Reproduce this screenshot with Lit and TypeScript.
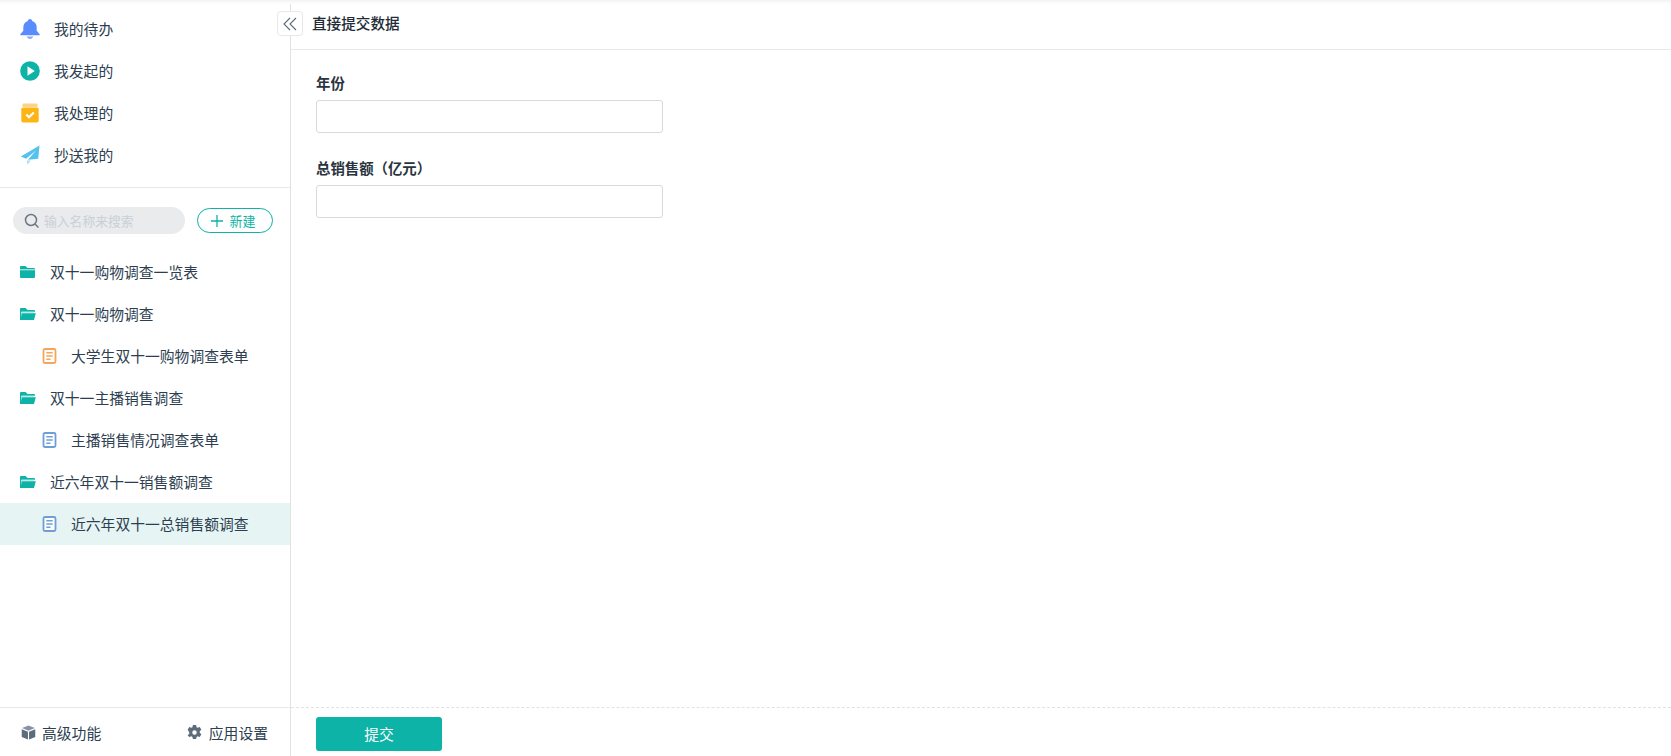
import { LitElement, css, html, svg } from "lit";
import { customElement } from "lit/decorators.js";

const bell = svg`<path fill="#5b8cff" d="M10 0c1.200 0 2 .8 2.200 1.900 3 1 4.500 3.500 4.500 6.500v3.400l3 3.400v1.100H.3v-1.100l3-3.400V8.400c0-3 1.500-5.500 4.500-6.500C8 .8 8.800 0 10 0z"/><path fill="#8fa8ff" d="M6.800 17.500h6.400c-.4 1.500-1.600 2.500-3.200 2.500s-2.800-1-3.200-2.500z"/>`;
const play = svg`<circle cx="10" cy="10" r="9.800" fill="#0db3a6"/><path fill="#fff" d="M7.500 5.300v9.400l7.300-4.700z"/>`;
const box = svg`<path fill="#fdd28a" d="M3.500 .5h13a1 1 0 0 1 1 1V4h-15V1.500a1 1 0 0 1 1-1z"/><rect x="1.300" y="4.500" width="17.400" height="15" rx="1.800" fill="#fdb515"/><path fill="none" stroke="#fff" stroke-width="2.200" d="M6.300 11.500l2.700 2.700 4.800-4.700"/>`;
const plane = svg`<path fill="#55c1ee" d="M19.500 .5L.8 11.500l5.200 2.300L16 5.500 8 14.800l10.200-1z"/><path fill="#9fdcf6" d="M7 15.500l3.800 0-3.400 4z"/>`;

const folder = (open: boolean) =>
  open
    ? svg`<path fill="#0db3a6" d="M1 3a1 1 0 0 1 1-1h4.500l2 2H15a1 1 0 0 1 1 1v.8H2.400V14H1z"/><rect x="2.400" y="5.800" width="12.600" height="1.400" fill="#bfe9e5"/><path fill="#0db3a6" d="M3 7.200H16.800L15 14H1.400z"/>`
    : svg`<path fill="#0db3a6" d="M1 3a1 1 0 0 1 1-1h4.500l2 2H15a1 1 0 0 1 1 1H1z"/><rect x="1" y="5" width="15" height="1.300" fill="#9fdcd6"/><path fill="#0db3a6" d="M1 6.300h15V13a1 1 0 0 1-1 1H2a1 1 0 0 1-1-1z"/>`;

const doc = (color: string) => svg`
  <rect x="1" y="1" width="12" height="14" rx="1.500" fill="#fff" stroke=${color} stroke-width="1.800"/>
  <path stroke=${color} stroke-width="1.500" d="M3.800 4.800h6.400M3.800 8h6.400M3.800 11.200h4.200"/>`;

const NAV = [
  { label: "我的待办", icon: bell },
  { label: "我发起的", icon: play },
  { label: "我处理的", icon: box },
  { label: "抄送我的", icon: plane },
];

const TREE = [
  { label: "双十一购物调查一览表", kind: "closed" },
  { label: "双十一购物调查", kind: "open" },
  { label: "大学生双十一购物调查表单", kind: "doc", color: "#f5a55a" },
  { label: "双十一主播销售调查", kind: "open" },
  { label: "主播销售情况调查表单", kind: "doc", color: "#6d9fd6" },
  { label: "近六年双十一销售额调查", kind: "open" },
  { label: "近六年双十一总销售额调查", kind: "doc", color: "#6d9fd6", active: true },
];

@customElement("app-root")
export class AppRoot extends LitElement {
  static styles = css`
    :host {
      display: flex;
      height: 756px;
      position: relative;
      font-family: "Liberation Sans", "Noto Sans CJK SC", sans-serif;
      font-size: 14.800px;
      color: #2c3e50;
      background: #fff;
      overflow: hidden;
    }
    .top-shadow {
      position: absolute;
      left: 0;
      right: 0;
      top: 0;
      height: 4px;
      background: linear-gradient(#f3f3f3, #fff);
    }
    aside {
      width: 291px;
      box-sizing: border-box;
      flex: none;
      border-right: 1px solid #e2e2e2;
      display: flex;
      flex-direction: column;
    }
    .nav {
      padding-top: 8px;
      height: 188px;
      box-sizing: border-box;
      border-bottom: 1px solid #e8e8e8;
    }
    .nav-row {
      height: 42px;
      display: flex;
      align-items: center;
      padding-left: 20px;
      gap: 14px;
    }
    .nav-row svg {
      width: 20px;
      height: 20px;
    }
    .nav-row span,
    .tree-row span {
      margin-top: -2px;
    }
    .tools {
      display: flex;
      align-items: center;
      padding: 19px 0 0 13px;
      height: 27px;
    }
    .search {
      width: 172px;
      height: 27px;
      background: #e9ebed;
      border-radius: 14px;
      display: flex;
      align-items: center;
      padding-left: 11px;
      box-sizing: border-box;
      gap: 4px;
      font-size: 12.800px;
      color: #c9d0d8;
    }
    .search svg {
      width: 16px;
      height: 16px;
      flex: none;
    }
    .new {
      margin-left: 12px;
      width: 76px;
      height: 25px;
      box-sizing: border-box;
      border: 1px solid #0db3a6;
      border-radius: 13px;
      display: flex;
      align-items: center;
      justify-content: center;
      gap: 5px;
      padding-right: 4px;
      font-size: 13px;
      color: #0db3a6;
    }
    .new svg {
      width: 14px;
      height: 14px;
    }
    .tree {
      margin-top: 17px;
      flex: 1;
    }
    .tree-row {
      height: 42px;
      display: flex;
      align-items: center;
      padding-left: 19px;
      gap: 14px;
    }
    .tree-row svg {
      width: 17px;
      height: 16px;
    }
    .tree-row.child {
      padding-left: 41px;
      gap: 13px;
    }
    .tree-row.active {
      background: #e6f5f4;
    }
    .side-foot {
      height: 49px;
      box-sizing: border-box;
      border-top: 1px solid #e8e8e8;
      display: flex;
      align-items: center;
      justify-content: space-between;
      padding: 0 22px 0 21px;
    }
    .foot-item {
      display: flex;
      align-items: center;
      gap: 6px;
    }
    .foot-item.settings {
      gap: 7px;
    }
    .foot-item svg {
      width: 15px;
      height: 15px;
    }
    main {
      flex: 1;
      display: flex;
      flex-direction: column;
      min-width: 0;
    }
    header {
      height: 50px;
      box-sizing: border-box;
      border-bottom: 1px solid #e8e8e8;
      padding: 0 0 4px 21px;
      display: flex;
      align-items: center;
      font-weight: 500;
      font-size: 14.600px;
      color: #222b35;
    }
    .form {
      flex: 1;
      padding: 24px 0 0 25px;
    }
    .field {
      margin-bottom: 26px;
    }
    .field label {
      display: block;
      font-size: 14.400px;
      font-weight: 700;
      line-height: 20px;
      margin-bottom: 6px;
      color: #2a3440;
    }
    .field input {
      display: block;
      width: 347px;
      height: 33px;
      box-sizing: border-box;
      border: 1px solid #d9d9d9;
      border-radius: 3px;
      background: #fff;
      outline: none;
    }
    .actions {
      height: 49px;
      box-sizing: border-box;
      border-top: 1px dashed #e2e2e2;
      padding: 9px 0 0 25px;
    }
    .submit {
      width: 126px;
      height: 34px;
      border: none;
      border-radius: 3px;
      background: #0db3a6;
      color: #fff;
      font: inherit;
      padding: 0 0 2px;
    }
    .collapse {
      position: absolute;
      left: 277px;
      top: 11px;
      width: 26px;
      height: 25px;
      box-sizing: border-box;
      background: #fff;
      border: 1px solid #e8e8e8;
      border-radius: 4px;
      display: flex;
      align-items: center;
      justify-content: center;
    }
    .collapse svg {
      width: 14px;
      height: 14px;
    }
  `;

  private treeIcon(row: (typeof TREE)[number]) {
    if (row.kind === "doc") {
      return html`<svg viewBox="0 0 14 16">${doc(row.color!)}</svg>`;
    }
    return html`<svg viewBox="0 0 17 16">${folder(row.kind === "open")}</svg>`;
  }

  render() {
    return html`
      <aside>
        <div class="nav">
          ${NAV.map(
            (n) => html`<div class="nav-row">
              <svg viewBox="0 0 20 20">${n.icon}</svg><span>${n.label}</span>
            </div>`
          )}
        </div>
        <div class="tools">
          <div class="search">
            <svg viewBox="0 0 16 16" fill="none" stroke="#6b7785" stroke-width="1.500">
              <circle cx="7" cy="7" r="5.500" /><path d="M11 11l3.500 3.500" />
            </svg>
            <span>输入名称来搜索</span>
          </div>
          <div class="new">
            <svg viewBox="0 0 14 14" stroke="#0db3a6" stroke-width="1.300"><path d="M7 1v12M1 7h12" /></svg>
            <span>新建</span>
          </div>
        </div>
        <div class="tree">
          ${TREE.map(
            (row) => html`<div
              class="tree-row ${row.kind === "doc" ? "child" : ""} ${row.active ? "active" : ""}"
            >
              ${this.treeIcon(row)}<span>${row.label}</span>
            </div>`
          )}
        </div>
        <div class="side-foot">
          <div class="foot-item">
            <svg viewBox="0 0 16 16">
              <path fill="#8593a3" d="M8 .5l6.800 2.700L8 6 1.200 3.200z" />
              <path fill="#5d6b7a" d="M.8 4.500l6.600 2.700v8.300L.8 12.700zM15.200 4.500v8.200l-6.600 2.800V7.200z" />
            </svg>
            <span>高级功能</span>
          </div>
          <div class="foot-item settings">
            <svg viewBox="0 0 16 16">
              <path
                fill="#5d6b7a"
                fill-rule="evenodd"
                d="M6.300 0h3.400l.5 2.300 1.200.7 2.200-.8 1.700 2.900-1.700 1.600v1.600l1.700 1.600-1.700 2.900-2.200-.8-1.200.7-.5 2.300H6.300l-.5-2.300-1.200-.7-2.200.8L.7 10.900l1.700-1.600V7.700L.7 5.100l1.700-2.900 2.200.8 1.200-.7zM8 5.600a2.400 2.400 0 1 0 0 4.800 2.400 2.400 0 0 0 0-4.800z"
              />
            </svg>
            <span>应用设置</span>
          </div>
        </div>
      </aside>
      <main>
        <header>直接提交数据</header>
        <div class="form">
          <div class="field"><label>年份</label><input /></div>
          <div class="field"><label>总销售额（亿元）</label><input /></div>
        </div>
        <div class="actions"><button class="submit">提交</button></div>
      </main>
      <div class="top-shadow"></div>
      <div class="collapse">
        <svg viewBox="0 0 14 14" fill="none" stroke="#5d6b7a" stroke-width="1.100">
          <path d="M7 1L1 7l6 6M13 1L7 7l6 6" />
        </svg>
      </div>
    `;
  }
}
